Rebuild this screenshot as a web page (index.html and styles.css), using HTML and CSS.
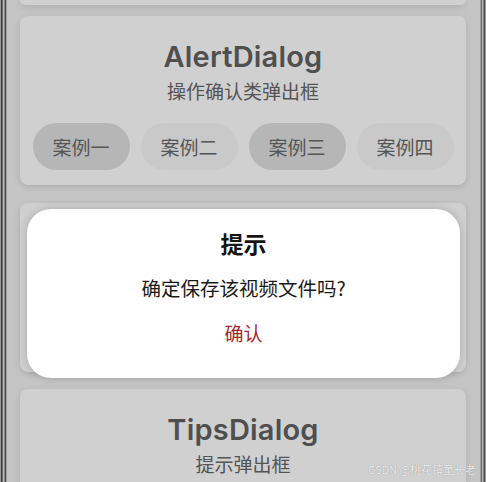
FILE: index.html
```html
<!DOCTYPE html>
<html lang="zh">
<head>
<meta charset="utf-8">
<title>AlertDialog</title>
<link rel="stylesheet" href="styles.css">
</head>
<body>
<div class="screen">
  <div class="card stub"></div>

  <div class="card">
    <div class="card-title">AlertDialog</div>
    <div class="card-sub">操作确认类弹出框</div>
    <div class="btn-row">
      <div class="btn dark">案例一</div>
      <div class="btn">案例二</div>
      <div class="btn dark">案例三</div>
      <div class="btn">案例四</div>
    </div>
  </div>

  <div class="card second"></div>

  <div class="card third">
    <div class="card-title">TipsDialog</div>
    <div class="card-sub">提示弹出框</div>
  </div>

  <div class="dialog">
    <div class="dlg-title">提示</div>
    <div class="dlg-msg">确定保存该视频文件吗?</div>
    <div class="dlg-ok">确认</div>
  </div>

  <div class="watermark">CSDN @桃花镇童长老</div>
</div>
</body>
</html>
```

FILE: styles.css
```css
html, body {
  margin: 0;
  padding: 0;
  width: 486px;
  height: 482px;
  overflow: hidden;
  background: #c5c5c5;
  font-family: "Noto Sans CJK SC", "Noto Sans", sans-serif;
}

.screen {
  position: relative;
  width: 486px;
  height: 482px;
  overflow: hidden;
  box-sizing: border-box;
  padding: 0 20px;
  display: flex;
  flex-direction: column;
  background: #c5c5c5;
  box-shadow:
    inset 1px 0 0 #9a9a9a,
    inset 2px 0 0 #3e3e3e,
    inset 3px 0 0 #6a6a6a,
    inset 4px 0 0 #b9b9b9,
    inset 5px 0 0 #8a8a8a,
    inset 6px 0 0 #4d4d4d,
    inset 7px 0 0 #9c9c9c,
    inset -1px 0 0 #9a9a9a,
    inset -2px 0 0 #4a4a4a,
    inset -3px 0 0 #7a7a7a,
    inset -4px 0 0 #bcbcbc,
    inset -5px 0 0 #6a6a6a,
    inset -6px 0 0 #a0a0a0;
}

.card {
  flex: none;
  height: 169px;
  box-sizing: border-box;
  background: #d0d0d0;
  border-radius: 8px;
  box-shadow: 0 2px 6px rgba(0, 0, 0, 0.13);
  display: flex;
  flex-direction: column;
  align-items: center;
  padding: 24px 13px 15px;
}

.stub {
  height: 5px;
  padding: 0;
  border-radius: 0 0 8px 8px;
  margin-bottom: 11px;
}

.second {
  margin-top: 18px;
}

.third {
  margin-top: 17px;
}

.card-title {
  font-family: Inter, "Noto Sans", sans-serif;
  font-weight: 600;
  font-size: 29px;
  line-height: 34px;
  color: #4f4f4f;
  letter-spacing: 0.2px;
}

.card-sub {
  margin-top: 5px;
  font-size: 19px;
  line-height: 24px;
  color: #545454;
}

.btn-row {
  margin-top: 20px;
  display: flex;
  gap: 11px;
}

.btn {
  width: 97px;
  height: 47px;
  border-radius: 24px;
  background: #c9c9c9;
  color: #555555;
  font-size: 19px;
  display: flex;
  align-items: center;
  justify-content: center;
}

.btn.dark {
  background: #b6b6b6;
}

.dialog {
  position: absolute;
  left: 27px;
  top: 209px;
  width: 433px;
  height: 169px;
  box-sizing: border-box;
  background: #ffffff;
  border-radius: 24px;
  box-shadow: 0 0 10px rgba(0, 0, 0, 0.18);
  display: flex;
  flex-direction: column;
  align-items: center;
  padding-top: 19px;
}

.dlg-title {
  font-size: 23px;
  font-weight: 700;
  line-height: 30px;
  color: #151515;
}

.dlg-msg {
  margin-top: 17px;
  font-size: 19.5px;
  line-height: 26px;
  color: #1a1a1a;
}

.dlg-ok {
  margin-top: 19px;
  font-size: 19px;
  line-height: 26px;
  color: #a6262c;
}

.watermark {
  position: absolute;
  right: 10px;
  bottom: 5px;
  font-size: 11px;
  color: #ececec;
  text-shadow: 0 0 1px rgba(0, 0, 0, 0.35);
}
```
